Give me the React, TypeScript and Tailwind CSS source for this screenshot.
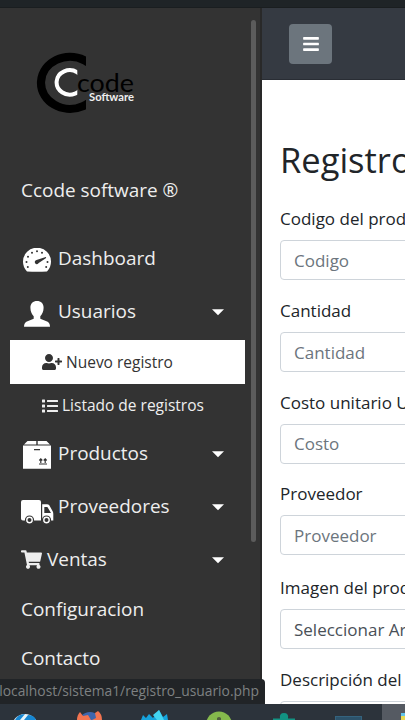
import React from "react";
import { FaBars, FaList, FaShoppingCart, FaUserPlus } from "react-icons/fa";

function Logo() {
  return (
    <svg width="102" height="64" viewBox="35 51 102 64" className="block">
      <clipPath id="outer"><rect x="35" y="51" width="51" height="64" /></clipPath>
      <clipPath id="inner"><rect x="50" y="65" width="27.3" height="36" /></clipPath>
      <path clipPath="url(#outer)" d="M99 83A29 26 0 1 0 98.9 85" fill="none" stroke="#000" strokeWidth="8.2" />
      <path clipPath="url(#inner)" d="M83 83A13.2 12.2 0 1 0 82.9 84" fill="none" stroke="#fff" strokeWidth="4" />
      <text x="77" y="91.7" fontSize="25" textLength="57" lengthAdjust="spacingAndGlyphs" fill="#000" className="font-[Lato,sans-serif]">code</text>
      <text x="89" y="100.7" fontSize="10.5" textLength="45" lengthAdjust="spacingAndGlyphs" fill="#eee" className="font-[Lato,sans-serif] font-bold">Software</text>
    </svg>
  );
}

function GaugeIcon() {
  return (
    <svg width="28" height="24" viewBox="0 0 28 24">
      <path d="M4 23.5A14 14 0 1 1 24 23.5Q14 24.2 4 23.5Z" fill="#fff" />
      <g fill="#333">
        <circle cx="3.5" cy="14" r="1" /><circle cx="5" cy="8.7" r="1" /><circle cx="9" cy="4.8" r="1" />
        <circle cx="14" cy="3.3" r="1" /><circle cx="19" cy="4.8" r="1" /><circle cx="24.5" cy="14" r="1" />
        <circle cx="4.8" cy="19" r="1" /><circle cx="23.2" cy="19" r="1" />
        <path d="M22.8 9.1Q23.6 9.3 22.8 10.2L15.7 15.1A2.1 2.1 0 1 1 13.5 12Z" />
      </g>
    </svg>
  );
}

function PersonIcon() {
  return (
    <svg width="26" height="26" viewBox="0 0 26 26">
      <path d="M13 0C17 0 19.6 2.5 19.6 6.8C19.6 10.8 18 13.5 16.3 15.2V17.8L22.5 20.3Q26 21.7 26 25.7H0Q0 21.7 3.5 20.3L9.7 17.8V15.2C8 13.5 6.4 10.8 6.4 6.8C6.4 2.5 9 0 13 0Z" fill="#fff" />
    </svg>
  );
}

function BoxIcon() {
  return (
    <svg width="28" height="28" viewBox="0 0 28 28">
      <path d="M4.5 0H13.3V3.5H1ZM14.7 0H23.5L27 3.5H14.7ZM0 4.5H28V27.7H0Z" fill="#fff" />
      <path d="M11 8.7H17M16 23H24M17.8 22V18M22.2 22V18M16.3 19.5L17.8 17.9L19.3 19.5M20.7 19.5L22.2 17.9L23.7 19.5" fill="none" stroke="#333" strokeWidth="1.2" />
    </svg>
  );
}

function TruckIcon() {
  return (
    <svg width="33" height="24" viewBox="0 0 33 24">
      <path d="M2 0H18Q20 0 20 2V20.5H2Q0 20.5 0 18.5V2Q0 0 2 0ZM21.2 4.2H26Q27.5 4.2 28.3 5.3L31.5 11Q32.3 12.2 32.3 14V20.5H21.2Z" fill="#fff" />
      <path d="M23.3 7H26.4L30 13H23.3Z" fill="#333" />
      <g fill="#fff" stroke="#333" strokeWidth="1.2">
        <circle cx="8.5" cy="20" r="4" /><circle cx="25.5" cy="20" r="4" />
      </g>
      <circle cx="8.5" cy="20" r="2" fill="#333" /><circle cx="25.5" cy="20" r="2" fill="#333" />
    </svg>
  );
}

function Caret() {
  return <svg width="12" height="7" viewBox="0 0 12 7" className="ml-auto mt-[2px]"><path d="M0 .3H12L6 6.3Z" fill="#fff" /></svg>;
}

type ItemProps = { label: string; icon?: React.ReactNode; iconBox?: string; caret?: boolean; box: string };

function Item({ label, icon, iconBox = "", caret, box }: ItemProps) {
  return (
    <a className={`flex shrink-0 items-center pr-[27.5px] pl-[21px] text-[#eee] ${box}`}>
      {icon && <span className={`flex shrink-0 ${iconBox}`}>{icon}</span>}
      <span className="whitespace-nowrap">{label}</span>
      {caret && <Caret />}
    </a>
  );
}

function Field({ label, placeholder, box = "mb-[17.8px]", tone = "text-[#6c757d]" }: { label: string; placeholder: string; box?: string; tone?: string }) {
  return (
    <div className={box}>
      <div className="h-[34px] whitespace-nowrap text-[17px] leading-[26px]">{label}</div>
      <div className={`flex h-10 w-[300px] items-center rounded border border-[#ced4da] bg-white pl-[13px] pt-px text-[17px] whitespace-nowrap ${tone}`}>{placeholder}</div>
    </div>
  );
}

function Taskbar() {
  return (
    <footer className="h-4 shrink-0 bg-[#2c333b]">
      <svg width="405" height="16" viewBox="0 704 405 16" className="block">
        <circle cx="25" cy="727" r="13" fill="#e8f5fb" />
        <path d="M15 720Q18 714 25 714L20 720ZM24 720L28 715Q34 715 36 720Z" fill="#1687d3" />
        <circle cx="90" cy="724" r="12" fill="#3d66ad" />
        <path d="M77 720Q77 715 80 712L83 716L88 715L91 720ZM92 720L96 718L95 713L98 711Q102 714 102 720Z" fill="#f27450" />
        <path d="M141 720L143 715L146 718L149 714L153 718L159 710L163 717L167 714L168 720Z" fill="#16a3dc" />
        <path d="M153 715L159 710L164 720H157Z" fill="#43d5f2" />
        <circle cx="219" cy="724.5" r="13" fill="#85b94c" />
        <path d="M217 720V718Q219 716 221 718V720Z" fill="#50603f" />
        <path d="M273 720V718.5H280Q279 713 284 713Q289 713 288 718.5H295V720Z" fill="#129383" />
        <rect x="335.5" y="716.5" width="26" height="6" fill="#2c526a" stroke="#34637e" />
        <rect x="382" y="704" width="23" height="16" fill="#555a62" />
        <rect x="401" y="713" width="4" height="3" fill="#62c5ed" />
        <rect x="401" y="716" width="4" height="4" fill="#e8db55" />
      </svg>
    </footer>
  );
}

export default function App() {
  return (
    <div className="relative flex h-[720px] w-[405px] flex-col overflow-hidden bg-white font-['Open_Sans',sans-serif] text-[#212529]">
      <div className="h-2 shrink-0 border-b border-[#1a1e20] bg-[#1f2427]" />
      <div className="flex h-[696px] shrink-0">
        <aside className="flex w-[262px] shrink-0 bg-[#333]">
          <nav className="flex w-[251px] shrink-0 flex-col text-[18.95px]">
            <div className="h-[155px] pt-[43px] pl-[35px]"><Logo /></div>
            <Item label="Ccode software ®" box="h-[53px] pt-px" />
            <Item label="Dashboard" icon={<GaugeIcon />} iconBox="ml-[2px] mr-[7px] mt-[3px]" box="mt-[16px] h-[53px]" />
            <Item label="Usuarios" icon={<PersonIcon />} iconBox="ml-[3px] mr-[8px] mt-[4px]" caret box="h-[53px]" />
            <a className="mt-[2px] mr-[6px] ml-[10px] flex h-[44px] shrink-0 items-center bg-white pl-8 pt-[2px] text-[15.5px] text-[#333]">
              <FaUserPlus className="mr-[4px] mb-[2px] h-4 w-5" />Nuevo registro
            </a>
            <a className="flex h-[43px] shrink-0 items-center pl-[42px] pt-px text-[15.5px] text-[#eee]">
              <FaList className="mr-[4px] mb-px h-4 w-4" />Listado de registros
            </a>
            <Item label="Productos" icon={<BoxIcon />} iconBox="ml-[2px] mr-[7px] mt-[3px]" caret box="h-[53px]" />
            <Item label="Proveedores" icon={<TruckIcon />} iconBox="mr-[4px] mt-[10px]" caret box="h-[53px]" />
            <Item label="Ventas" icon={<FaShoppingCart className="h-[19px] w-[21px]" />} iconBox="mr-[5px]" caret box="h-[52px]" />
            <Item label="Configuracion" box="h-[49px]" />
            <Item label="Contacto" box="h-[49px]" />
          </nav>
          <div className="mt-3 h-[522px] w-[5px] rounded-full bg-[#5c5c5c]" />
          <div className="ml-auto w-[2px] bg-[#292929]" />
        </aside>
        <main className="w-[143px] overflow-hidden">
          <header className="flex h-[72px] items-start border-b border-[#292d34] bg-[#353a42] pt-4 pl-[27px]">
            <button className="flex h-10 w-[43px] items-center justify-center rounded bg-[#6c757d] text-white"><FaBars className="h-[18px] w-4" /></button>
          </header>
          <div className="pl-[18px]">
            <h1 className="mt-[57px] mb-[11px] h-[46px] text-[34.5px] leading-[46px] whitespace-nowrap">Registro</h1>
            <div className="pt-[12px]">
              <Field label="Codigo del producto" placeholder="Codigo" />
              <Field label="Cantidad" placeholder="Cantidad" />
              <Field label="Costo unitario USD" placeholder="Costo" />
              <Field label="Proveedor" placeholder="Proveedor" box="mb-[19.5px]" />
              <Field label="Imagen del producto" placeholder="Seleccionar Archivo" tone="text-[#495057]" />
              <Field label="Descripción del producto" placeholder="" />
            </div>
          </div>
        </main>
      </div>
      <Taskbar />
      <div className="absolute bottom-4 left-0 flex h-[25px] w-[265px] items-center justify-end overflow-hidden rounded-tr bg-[#212427] pr-[6px] text-[13.85px] whitespace-nowrap text-[#7e8182]">localhost/sistema1/registro_usuario.php</div>
    </div>
  );
}
